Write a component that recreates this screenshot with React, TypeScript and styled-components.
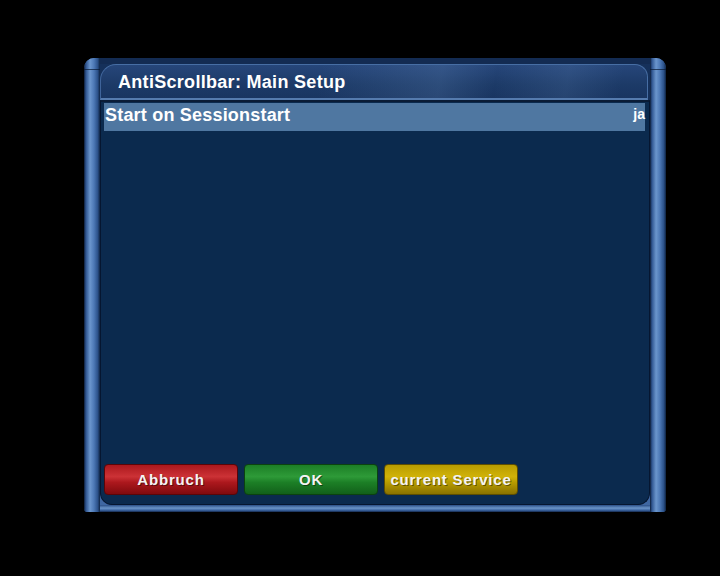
import React from "react";
import styled, { createGlobalStyle } from "styled-components";

const GlobalStyle = createGlobalStyle`
  html, body {
    margin: 0;
    padding: 0;
    background: #000;
  }
  body {
    font-family: "Liberation Sans", Arial, sans-serif;
  }
`;

type Tone = "red" | "green" | "yellow";

const tones: Record<Tone, { top: string; mid: string; bottom: string; border: string }> = {
  red: { top: "#ac181d", mid: "#cc3236", bottom: "#800a0e", border: "#5a0508" },
  green: { top: "#1c7f26", mid: "#2e9a38", bottom: "#12601a", border: "#0b4210" },
  yellow: { top: "#b89c00", mid: "#d0b208", bottom: "#8a7200", border: "#5e4e00" },
};

const App = () => {
  return (
    <>
      <GlobalStyle />
      <Screen>
        <Window>
          <Rail side="left" />
          <Middle>
            <TopBand />
            <TitleBar>
              <Title>AntiScrollbar: Main Setup</Title>
            </TitleBar>
            <Content>
              <List>
                <Row selected>
                  <RowLabel>Start on Sessionstart</RowLabel>
                  <RowValue>ja</RowValue>
                </Row>
              </List>
              <ButtonBar>
                <Button tone="red">Abbruch</Button>
                <Button tone="green">OK</Button>
                <Button tone="yellow">current Service</Button>
              </ButtonBar>
            </Content>
            <BottomRail />
          </Middle>
          <Rail side="right" />
        </Window>
      </Screen>
    </>
  );
};

export default App;

const Screen = styled.div`
  width: 720px;
  height: 576px;
  background: #000;
  padding: 58px 0 0 84px;
  box-sizing: border-box;
`;

const Window = styled.div`
  width: 582px;
  height: 454px;
  display: flex;
  background: #3f67a2;
  border-radius: 10px 10px 4px 4px;
`;

const Rail = styled.div<{ side: "left" | "right" }>`
  width: 16px;
  flex-shrink: 0;
  background: linear-gradient(
    to right,
    #0c1c36 0%,
    #2f5590 12%,
    #6b96cd 38%,
    #4d79b6 62%,
    #2b5189 86%,
    #0d2240 100%
  );
  border-radius: ${(p) => (p.side === "left" ? "10px 0 0 3px" : "0 10px 3px 0")};
  position: relative;

  &::after {
    content: "";
    position: absolute;
    left: 0;
    right: 0;
    top: 11px;
    height: 1px;
    background: rgba(10, 25, 50, 0.7);
  }
`;

const Middle = styled.div`
  flex: 1;
  display: flex;
  flex-direction: column;
  background: linear-gradient(to bottom, #15305a 0, #15305a 40px, #3f67a2 400px);
`;

const TopBand = styled.div`
  height: 6px;
  background: #132b52;
`;

const TitleBar = styled.div`
  height: 33px;
  margin-right: 2px;
  display: flex;
  align-items: center;
  padding-left: 17px;
  border-radius: 16px 13px 0 0;
  border-top: 1px solid #476ea4;
  border-left: 1px solid #3f649a;
  border-right: 1px solid #476ea4;
  border-bottom: 2px solid #557bae;
  background:
    linear-gradient(
      100deg,
      rgba(255, 255, 255, 0) 40%,
      rgba(120, 160, 210, 0.18) 62%,
      rgba(255, 255, 255, 0) 72%,
      rgba(120, 160, 210, 0.14) 85%,
      rgba(255, 255, 255, 0) 95%
    ),
    linear-gradient(to bottom, #26467a 0%, #1c3a67 60%, #193561 100%);
`;

const Title = styled.div`
  color: #ffffff;
  font-size: 18px;
  font-weight: bold;
  letter-spacing: 0.3px;
  margin-top: 1px;
`;

const Content = styled.div`
  flex: 1;
  display: flex;
  flex-direction: column;
  background: #0b2a4e;
  border-top: 2px solid #0a1c36;
  border-left: 1px solid #061630;
  border-right: 1px solid #061630;
  border-bottom: 1px solid #061630;
  border-radius: 0 0 12px 12px;
  padding: 1px 4px 9px 3px;
`;

const List = styled.div`
  flex: 1;
  display: flex;
  flex-direction: column;
`;

const Row = styled.div<{ selected?: boolean }>`
  height: 28px;
  display: flex;
  align-items: center;
  justify-content: space-between;
  padding: 0 0 0 1px;
  background: ${(p) => (p.selected ? "#4f77a1" : "transparent")};
  color: #ffffff;
`;

const RowLabel = styled.span`
  font-size: 18px;
  font-weight: bold;
  letter-spacing: 0.2px;
  margin-top: -3px;
`;

const RowValue = styled.span`
  font-size: 14px;
  font-weight: bold;
  margin-top: -6px;
`;

const ButtonBar = styled.div`
  display: flex;
  gap: 6px;
`;

const Button = styled.div<{ tone: Tone }>`
  width: 134px;
  height: 31px;
  box-sizing: border-box;
  display: flex;
  align-items: center;
  justify-content: center;
  border-radius: 4px;
  border: 1px solid ${(p) => tones[p.tone].border};
  background: linear-gradient(
    to bottom,
    ${(p) => tones[p.tone].top} 0%,
    ${(p) => tones[p.tone].mid} 40%,
    ${(p) => tones[p.tone].top} 60%,
    ${(p) => tones[p.tone].bottom} 100%
  );
  color: #f4f4f4;
  font-size: 15px;
  font-weight: bold;
  letter-spacing: 0.8px;
  text-shadow: 1px 1px 0 rgba(0, 0, 0, 0.45);
`;

const BottomRail = styled.div`
  height: 7px;
  background: linear-gradient(to bottom, #2a4e86 0%, #6a94c8 45%, #3a63a0 75%, #14284a 100%);
`;
